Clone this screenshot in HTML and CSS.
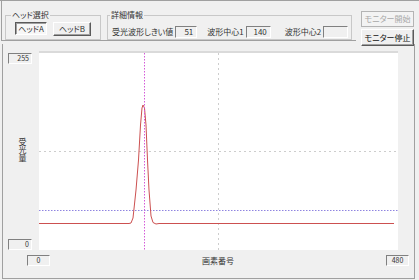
FILE: index.html
```html
<!DOCTYPE html>
<html lang="ja">

<head>
    <meta charset="UTF-8">
    <meta name="viewport" content="width=device-width, initial-scale=1.0">
    <title>波形モニター</title>
    <link rel="stylesheet" href="styles.css">
</head>

<body>
    <div class="top">
        <div class="groups">
            <fieldset class="group head">
                <legend>ヘッド選択</legend>
                <button class="btn pressed headA">ヘッドA</button>
                <button class="btn headB">ヘッドB</button>
            </fieldset>
            <fieldset class="group detail">
                <legend>詳細情報</legend>
                <span class="label">受光波形しきい値</span>
                <span class="val w1">51</span>
                <span class="label gap1">波形中心1</span>
                <span class="val w2">140</span>
                <span class="label gap2">波形中心2</span>
                <span class="val w2"></span>
            </fieldset>
        </div>
        <div class="monitor">
            <button class="mbtn" disabled>モニター開始</button>
            <button class="mbtn btn">モニター停止</button>
        </div>
    </div>

    <div class="graph">
        <div class="yaxis">
            <span class="num">255</span>
            <span class="ylabel">受光量</span>
            <span class="num">0</span>
        </div>
        <svg class="plot" width="359" height="197" viewBox="0 0 359 197">
            <!-- grid -->
            <line x1="0" y1="98.5" x2="359" y2="98.5" class="grid" />
            <line x1="179.5" y1="0" x2="179.5" y2="197" class="grid" />
            <!-- threshold -->
            <line x1="0" y1="157.5" x2="359" y2="157.5" class="thresh" />
            <!-- waveform -->
            <polyline class="wave"
                points="0,170.5 90,170.5 92,170 94,165 97,137 99.5,107 101.5,72 103,55 104,52 105.5,55 107,72 108.5,107 110,137 112,163 114,169.5 117,171 120,170.5 355,170.5" />
            <!-- center -->
            <line x1="105.5" y1="0" x2="105.5" y2="197" class="center" />
        </svg>
        <div class="xaxis">
            <span class="num mid">0</span>
            <span class="xlabel">画素番号</span>
            <span class="num mid">480</span>
        </div>
    </div>
</body>

</html>
```

FILE: styles.css
```css
body {
    margin: 0;
    width: 419px;
    height: 280px;
    overflow: hidden;
    background-color: #f0f0f0;
    font-family: "Noto Sans CJK JP", sans-serif;
    font-size: 8px;
    font-feature-settings: "palt";
    color: #333;
}

/* top bar */
.top {
    display: flex;
    align-items: flex-start;
    height: 41px;
    box-sizing: border-box;
    border-top: 1px solid #a0a0a0;
}

.groups {
    display: flex;
    align-items: flex-start;
    width: 355px;
    height: 40px;
    box-sizing: border-box;
    margin-left: 1px;
    padding: 9px 0 0 3px;
    border-left: 1px solid #a0a0a0;
    border-bottom: 1px solid #a0a0a0;
}

.group {
    margin: 0;
    height: 30px;
    box-sizing: border-box;
    border: 1px solid #c8c8c8;
    min-inline-size: 0;
}

.group legend {
    padding: 0 1px;
    line-height: 10px;
}

.head {
    width: 96px;
    padding: 2px 0 0 9px;
    display: flex;
    align-items: flex-start;
}

.head legend {
    margin-left: -4px;
}

.detail {
    width: 245px;
    margin-left: 6px;
    padding: 4px 0 0 4px;
    display: flex;
    align-items: center;
}

.detail legend {
    margin-left: -2px;
}

.btn,
.mbtn {
    font: inherit;
    color: inherit;
    padding: 0;
    margin: 0;
    background-color: #f0f0f0;
    border: 1px solid;
    border-color: #fff #5a5a5a #5a5a5a #fff;
    box-shadow: inset -1px -1px #a0a0a0;
    line-height: 1;
}

.btn.pressed {
    border-color: #5a5a5a #fff #fff #5a5a5a;
    box-shadow: inset 1px 1px #a0a0a0;
    background-color: #f7f7f7;
}

.headA {
    width: 32px;
    height: 13px;
}

.headB {
    width: 38px;
    height: 14px;
    margin-left: 6px;
}

.label {
    white-space: nowrap;
    line-height: 12px;
}

.gap1 {
    margin-left: 10px;
}

.gap2 {
    margin-left: 14px;
}

.val {
    height: 12px;
    box-sizing: border-box;
    margin-left: 2px;
    padding-right: 3px;
    text-align: right;
    line-height: 10px;
    border: 1px solid;
    border-color: #808080 #fff #fff #808080;
}

.w1 {
    width: 22px;
}

.w2 {
    width: 25px;
}

.monitor {
    display: flex;
    flex-direction: column;
    margin: 10px 0 0 5px;
}

.mbtn {
    width: 53px;
    height: 16px;
}

.mbtn:disabled {
    color: #a8a8a8;
    border-color: #b4b4b4;
    box-shadow: none;
    background-color: #f3f3f3;
}

.mbtn.btn {
    height: 17px;
    margin-top: 2px;
    color: #111;
}

/* graph panel */
.graph {
    display: grid;
    grid-template-columns: 36px 359px 1fr;
    grid-template-rows: 197px 1fr;
    height: 235px;
    box-sizing: border-box;
    margin: 3px 4px 0 2px;
    padding-top: 9px;
    border: 1px solid #a0a0a0;
    border-top: none;
}

.yaxis {
    display: flex;
    flex-direction: column;
    justify-content: space-between;
    align-items: flex-start;
    padding-left: 5px;
}

.num {
    width: 24px;
    height: 11px;
    box-sizing: border-box;
    padding-right: 2px;
    text-align: right;
    font-size: 7px;
    line-height: 9px;
    border: 1px solid;
    border-color: #808080 #fff #fff #808080;
}

.num.mid {
    width: 23px;
    padding-right: 0;
    text-align: center;
}

.ylabel {
    writing-mode: vertical-rl;
    margin: -4px 0 0 10px;
    line-height: 8px;
}

.plot {
    display: block;
    background-color: #fff;
    box-shadow: 0 -2px 0 #dadada;
}

.grid {
    stroke: #cdcdcd;
    stroke-width: 1;
    stroke-dasharray: 2 3;
}

.thresh {
    stroke: #8f84e0;
    stroke-width: 1;
    stroke-dasharray: 1.5 1.5;
}

.center {
    stroke: #d45ad8;
    stroke-width: 1;
    stroke-dasharray: 1.5 1.5;
}

.wave {
    fill: none;
    stroke: #cc5050;
    stroke-width: 1;
    stroke-linejoin: round;
}

.xaxis {
    grid-column: 1 / -1;
    display: flex;
    align-items: flex-start;
    padding: 5px 5px 0 24px;
}

.xlabel {
    flex: 1;
    text-align: center;
    line-height: 11px;
}
```
